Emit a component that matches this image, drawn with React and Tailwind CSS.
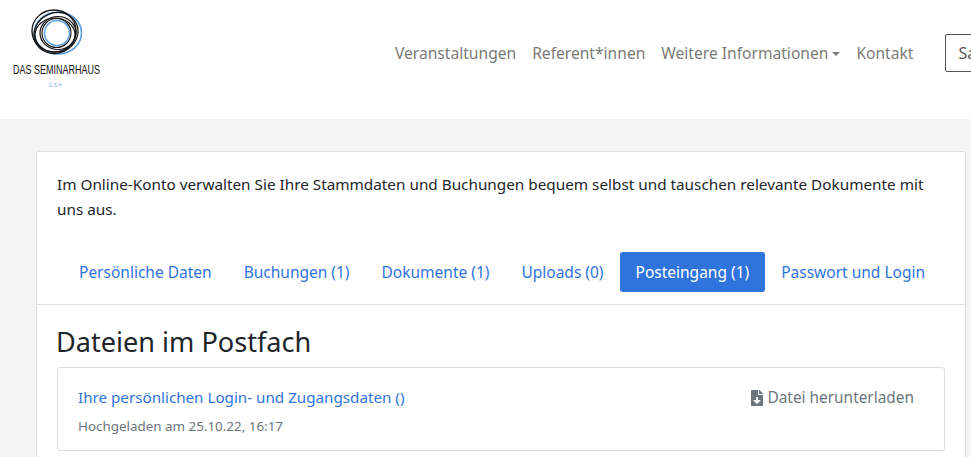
import React from 'react';
import { FaFileDownload } from 'react-icons/fa';

const Logo = () => (
  <div className="flex w-[82px] flex-col items-center">
    <svg width="54" height="54" viewBox="0 0 54 54" fill="none" className="mb-[3px]">
      <ellipse cx="29" cy="27" rx="23.5" ry="21" stroke="#5b9fe0" strokeWidth="1.6" />
      <ellipse cx="25" cy="25" rx="22" ry="21" stroke="#111" strokeWidth="1.3" />
      <ellipse cx="27" cy="27" rx="22.5" ry="20" stroke="#111" strokeWidth="1.2" transform="rotate(-25 27 27)" />
      <ellipse cx="26" cy="29" rx="20" ry="17" stroke="#111" strokeWidth="1.2" />
      <ellipse cx="29" cy="27" rx="18" ry="16.5" stroke="#111" strokeWidth="1.2" />
      <circle cx="27.5" cy="27" r="14.5" stroke="#111" strokeWidth="1.1" />
      <circle cx="28" cy="27" r="12.5" stroke="#5b9fe0" strokeWidth="1.5" />
    </svg>
    <span className="scale-x-[0.72] text-[12.5px] leading-[14px] whitespace-nowrap text-[#111] [font-family:'Liberation_Sans',sans-serif]">DAS SEMINARHAUS</span>
    <span className="mt-[6px] text-[4.5px] leading-[6px] tracking-[1.5px] text-[#6aa5dc] [font-family:'Liberation_Sans',sans-serif]">GSH</span>
  </div>
);

const NavLink = ({ children }) => (
  <a className="mt-[2px] text-[15.6px] whitespace-nowrap text-[#7b7b78]">{children}</a>
);

const tabs = [
  { label: 'Persönliche Daten' },
  { label: 'Buchungen (1)' },
  { label: 'Dokumente (1)' },
  { label: 'Uploads (0)' },
  { label: 'Posteingang (1)', active: true },
  { label: 'Passwort und Login' },
];

export default function App() {
  return (
    <div className="h-[457px] w-[971px] overflow-hidden bg-[#f4f4f4] text-[15.3px] text-[#212529] [font-family:'Noto_Sans',sans-serif]">
      <header className="flex h-[119px] items-start overflow-hidden bg-white">
        <div className="ml-[15px] mt-[6px] shrink-0"><Logo /></div>
        <nav className="ml-[298px] mt-[34px] flex h-[38px] shrink-0 items-center gap-[16px]">
          <NavLink>Veranstaltungen</NavLink>
          <NavLink>Referent*innen</NavLink>
          <span className="flex items-center">
            <NavLink>Weitere Informationen</NavLink>
            <span className="ml-[4px] mt-[2px] h-0 w-0 border-x-[4.5px] border-t-[4.5px] border-x-transparent border-t-[#7b7b78]" />
          </span>
          <NavLink>Kontakt</NavLink>
          <button className="ml-[16px] h-[38px] w-[60px] shrink-0 rounded-[2px] border border-[#555] px-[12px] text-left text-[16px] whitespace-nowrap text-[#555]">Sa</button>
        </nav>
      </header>

      <main className="ml-[36px] mt-[32px] w-[930px] rounded-[3px] border border-[#e0e0e0] bg-white pb-[20px]">
        <div className="border-b border-[#e0e0e0] px-[20px] pt-[20px]">
          <p className="leading-[25px]">Im Online-Konto verwalten Sie Ihre Stammdaten und Buchungen bequem selbst und tauschen relevante Dokumente mit uns aus.</p>
          <ul className="ml-[6px] mt-[30px] mb-[12px] flex">
            {tabs.map((tab) => (
              <li
                key={tab.label}
                className={`flex h-[40px] items-center rounded-[3px] px-[16px] pt-[2px] text-[15.5px] whitespace-nowrap ${tab.active ? 'bg-[#2f74dd] text-white' : 'text-[#2f74dd]'}`}
              >
                {tab.label}
              </li>
            ))}
          </ul>
        </div>
        <div className="px-[20px] pt-[20px]">
          <h2 className="-ml-px text-[27.1px] leading-[34px] font-normal">Dateien im Postfach</h2>
          <div className="mt-[8px] flex h-[84px] justify-between rounded-[3px] border border-[#dedede] px-[20px] pt-[17px]">
            <div>
              <a className="block text-[15.2px] leading-[24px] text-[#2f74dd]">Ihre persönlichen Login- und Zugangsdaten ()</a>
              <p className="mt-[7px] text-[13.4px] leading-[20px] text-[#6c757d]">Hochgeladen am 25.10.22, 16:17</p>
            </div>
            <a className="mr-[10px] flex h-[26px] items-center gap-[4px] text-[15.4px] text-[#6c757d]">
              <FaFileDownload className="h-[16px] w-[12px]" />
              Datei herunterladen
            </a>
          </div>
        </div>
      </main>
    </div>
  );
}
